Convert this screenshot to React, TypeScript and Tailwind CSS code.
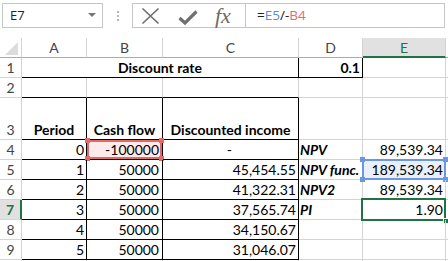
import React from "react";

const GRID = "grid grid-cols-[22px_65px_76px_136px_64px_83px_2px]";
const CELLFONT = "font-['Lato','Liberation_Sans',sans-serif] text-[14px] text-black";

type CP = { children?: React.ReactNode; cls?: string; span?: string };

function Cell({ children, cls = "", span = "" }: CP) {
  return (
    <div
      className={`relative border-r border-b border-[#d4d4d4] flex items-end pb-[1px] px-[2px] whitespace-nowrap overflow-visible leading-[16px] ${span} ${cls}`}
    >
      {children}
    </div>
  );
}

function RowHead({ n, active = false }: { n: string; active?: boolean }) {
  return (
    <div
      className={`border-r border-b border-[#d4d4d4] flex items-end justify-center pb-[1px] leading-[16px] font-['Lato','Liberation_Sans',sans-serif] text-[14px] ${
        active
          ? "bg-[#e1e1e1] text-[#217346] border-r-2 border-r-[#217346] font-bold"
          : "bg-white text-[#444]"
      }`}
    >
      {n}
    </div>
  );
}

function Corner({ color, pos }: { color: string; pos: string }) {
  return <div className={`absolute w-[5px] h-[5px] ${color} ${pos}`} />;
}

const rows = [
  { n: "4", a: "0", b: "-100000", c: "-", d: "NPV", e: "89,539.34" },
  { n: "5", a: "1", b: "50000", c: "45,454.55", d: "NPV func.", e: "189,539.34" },
  { n: "6", a: "2", b: "50000", c: "41,322.31", d: "NPV2", e: "89,539.34" },
  { n: "7", a: "3", b: "50000", c: "37,565.74", d: "PI", e: "1.90" },
  { n: "8", a: "4", b: "50000", c: "34,150.67", d: "", e: "" },
  { n: "9", a: "5", b: "50000", c: "31,046.07", d: "", e: "" },
];

export default function App() {
  return (
    <div className="w-[448px] h-[261px] overflow-hidden bg-white relative">
      {/* Toolbar */}
      <div className="h-[38px] flex items-start pt-[3px] pl-[2px] bg-white font-['Open_Sans','Noto_Sans',sans-serif]">
        <div className="w-[101px] h-[25px] border border-[#c6c6c6] flex items-center justify-between pl-[7px] pr-[5px]">
          <span className="text-[13px] text-[#222] leading-none">E7</span>
          <svg width="9" height="5" viewBox="0 0 9 5">
            <path d="M0 0 H8 L4 4 Z" fill="#777" />
          </svg>
        </div>
        <div className="ml-[14px] h-[25px] flex flex-col justify-center gap-[2px]">
          <div className="w-[2px] h-[2px] bg-[#b5b5b5]" />
          <div className="w-[2px] h-[2px] bg-[#b5b5b5]" />
          <div className="w-[2px] h-[2px] bg-[#b5b5b5]" />
        </div>
        <div className="ml-[13px] w-[113px] h-[25px] border-l border-t border-b border-[#c6c6c6] flex items-center">
          <svg className="ml-[8px]" width="19" height="18" viewBox="0 0 19 18">
            <path d="M1.5 1.5 L17.5 16.5 M17.5 1.5 L1.5 16.5" stroke="#707070" strokeWidth="1.7" fill="none" />
          </svg>
          <svg className="ml-[18px] mt-[3px]" width="20" height="15" viewBox="0 0 20 15">
            <path d="M1.5 8 L7 13 L18.5 1.5" stroke="#707070" strokeWidth="3.2" fill="none" strokeLinejoin="miter" />
          </svg>
          <span className="ml-[17px] font-['Liberation_Serif',serif] italic text-[22px] text-[#6b6b6b] leading-none">
            fx
          </span>
        </div>
        <div className="w-[200px] h-[25px] border border-[#c6c6c6] flex items-center pl-[11px]">
          <span className="text-[13.5px] leading-none text-[#222]">
            =<span className="text-[#5b8be3]">E5</span>/-<span className="text-[#e56b6b]">B4</span>
          </span>
        </div>
      </div>

      {/* Column headers */}
      <div className={`${GRID} h-[20px] font-['Lato','Liberation_Sans',sans-serif] text-[14px] text-[#444]`}>
        <div className="relative border-r border-b border-r-[#d4d4d4] border-b-[#ababab]">
          <svg className="absolute right-[3px] bottom-[2px]" width="13" height="13" viewBox="0 0 13 13">
            <path d="M13 0 V13 H0 Z" fill="#dcdcdc" />
          </svg>
        </div>
        {["A", "B", "C", "D"].map((l) => (
          <div
            key={l}
            className="border-r border-b border-r-[#d4d4d4] border-b-[#ababab] flex items-end justify-center pb-[1px] leading-[16px]"
          >
            {l}
          </div>
        ))}
        <div className="border-r border-b-2 border-r-[#d4d4d4] border-b-[#217346] bg-[#e1e1e1] text-[#217346] flex items-end justify-center pb-[0px] leading-[16px]">
          E
        </div>
        <div className="border-b border-b-[#ababab]" />
      </div>

      <div className={CELLFONT}>
        {/* Row 1 */}
        <div className={`${GRID} h-[20px]`}>
          <RowHead n="1" />
          <Cell span="col-span-3" cls="border-r-black border-b-black justify-center font-bold">
            Discount rate
          </Cell>
          <Cell cls="border-r-black border-b-black justify-end font-bold">0.1</Cell>
          <Cell />
          <div className="border-b border-[#d4d4d4]" />
        </div>
        {/* Row 2 */}
        <div className={`${GRID} h-[20px]`}>
          <RowHead n="2" />
          <Cell cls="border-b-black" />
          <Cell cls="border-b-black" />
          <Cell cls="border-b-black" />
          <Cell />
          <Cell />
          <div className="border-b border-[#d4d4d4]" />
        </div>
        {/* Row 3 */}
        <div className={`${GRID} h-[42px]`}>
          <RowHead n="3" />
          <Cell cls="border-r-black border-b-black items-center justify-center font-bold pb-0 pt-[1px]">Period</Cell>
          <Cell cls="border-r-black border-b-black items-center justify-center font-bold pb-0 pt-[1px]">Cash flow</Cell>
          <Cell cls="border-r-black border-b-black items-center justify-center font-bold pb-0 pt-[1px]">Discounted income</Cell>
          <Cell />
          <Cell />
          <div className="border-b border-[#d4d4d4]" />
        </div>
        {rows.map((r) => (
          <div key={r.n} className={`${GRID} h-[20px]`}>
            <RowHead n={r.n} active={r.n === "7"} />
            <Cell cls="border-r-black border-b-black justify-end">{r.a}</Cell>
            <Cell cls={`border-r-black border-b-black justify-end ${r.n === "4" ? "bg-[#fdeaea]" : ""}`}>
              {r.n === "4" && (
                <>
                  <div className="absolute inset-0 border-2 border-[#e46a6a]" />
                  <Corner color="bg-[#e46a6a]" pos="left-[-2px] top-[-2px]" />
                  <Corner color="bg-[#e46a6a]" pos="right-[-2px] top-[-2px]" />
                  <Corner color="bg-[#e46a6a]" pos="left-[-2px] bottom-[-2px]" />
                  <Corner color="bg-[#e46a6a]" pos="right-[-2px] bottom-[-2px]" />
                </>
              )}
              <span className="relative pr-[1px]">{r.b}</span>
            </Cell>
            <Cell cls={`border-r-black border-b-black justify-end ${r.n === "4" ? "pr-[66px]" : ""}`}>{r.c}</Cell>
            <Cell cls="justify-start font-bold italic overflow-hidden pl-[1px]">{r.d}</Cell>
            <Cell cls={`justify-end z-10 ${r.n === "5" ? "bg-[#e9effb]" : ""}`}>
              {r.n === "5" && (
                <>
                  <div className="absolute left-[-1px] top-[-1px] right-[-1px] bottom-[-1px] border-2 border-[#6d96e2]" />
                  <Corner color="bg-[#6d96e2]" pos="left-[-3px] top-[-3px]" />
                  <Corner color="bg-[#6d96e2]" pos="right-[-3px] top-[-3px]" />
                  <Corner color="bg-[#6d96e2]" pos="left-[-3px] bottom-[-3px]" />
                  <Corner color="bg-[#6d96e2]" pos="right-[-3px] bottom-[-3px]" />
                </>
              )}
              {r.n === "7" && (
                <>
                  <div className="absolute left-[-2px] top-[-2px] right-[-1px] bottom-[-2px] border-2 border-[#217346]" />
                  <div className="absolute right-[-4px] bottom-[-5px] w-[6px] h-[6px] bg-[#217346] border border-white" />
                </>
              )}
              <span className="relative">{r.e}</span>
            </Cell>
            <div className="border-b border-[#d4d4d4]" />
          </div>
        ))}
        {/* Row 10 partial (label below visible area) */}
        <div className={`${GRID} h-[20px]`}>
          <div className="border-r border-[#d4d4d4]" />
          <Cell />
          <Cell />
          <Cell />
          <Cell />
          <Cell />
          <div />
        </div>
      </div>
    </div>
  );
}
